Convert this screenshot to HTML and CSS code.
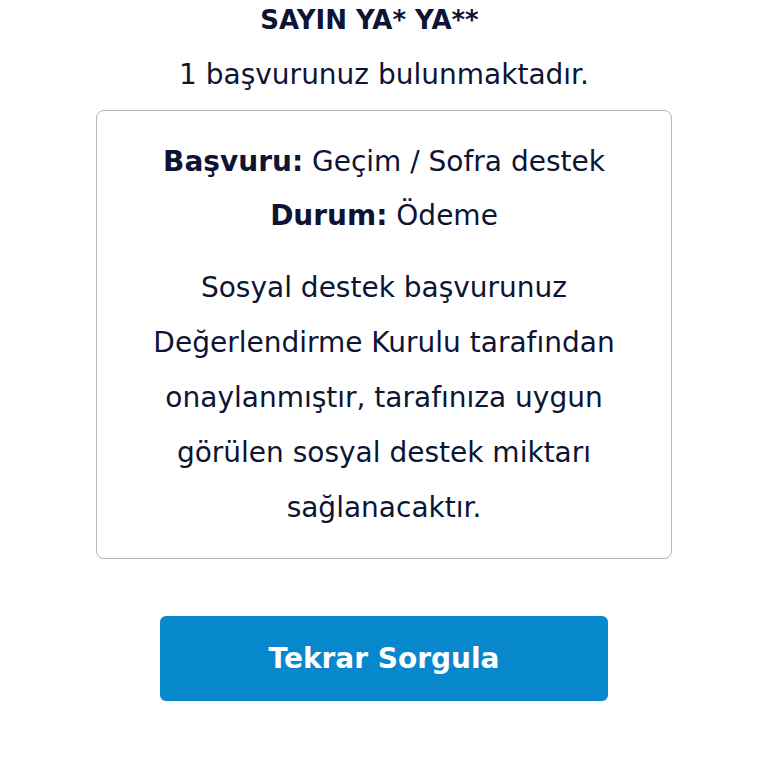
FILE: index.html
```html
<!DOCTYPE html>
<html lang="tr">
<head>
  <meta charset="UTF-8">
  <meta name="viewport" content="width=device-width, initial-scale=1.0">
  <title>Başvuru Sorgulama</title>
  <link rel="stylesheet" href="styles.css">
</head>
<body>
  <div class="container">
    <h1>SAYIN YA* YA**</h1>
    <p class="count">1 başvurunuz bulunmaktadır.</p>
    <div class="card">
      <div class="row"><b>Başvuru:</b> Geçim / Sofra destek</div>
      <div class="row"><b>Durum:</b> Ödeme</div>
      <p class="desc">Sosyal destek başvurunuz Değerlendirme Kurulu tarafından onaylanmıştır, tarafınıza uygun görülen sosyal destek miktarı sağlanacaktır.</p>
    </div>
    <button type="button" class="btn">Tekrar Sorgula</button>
  </div>
</body>
</html>
```

FILE: styles.css
```css
body {
  font-family: "DejaVu Sans", sans-serif;
  background-color: #ffffff;
  color: #0e1433;
  margin: 0;
  padding: 0;
}
.container {
  width: 576px;
  margin: 0 auto;
  text-align: center;
}
h1 {
  font-size: 26px;
  font-weight: bold;
  margin: 0;
  padding-right: 29px;
  line-height: 40px;
}
.count {
  font-size: 28px;
  margin: 0;
  line-height: 70px;
}
.card {
  border: 1px solid #b5b5b5;
  border-radius: 8px;
  padding: 24px 20px 23px;
  margin-top: 0;
  font-size: 28px;
  line-height: 54px;
}
.row b {
  font-weight: bold;
}
.desc {
  margin: 17px auto 0;
  max-width: 500px;
  line-height: 55px;
}
.btn {
  display: block;
  width: 448px;
  height: 85px;
  margin: 57px auto 0;
  background-color: #0788cd;
  color: #ffffff;
  border: none;
  border-radius: 6px;
  font-family: "DejaVu Sans", sans-serif;
  font-size: 28px;
  font-weight: bold;
  cursor: pointer;
}
```
